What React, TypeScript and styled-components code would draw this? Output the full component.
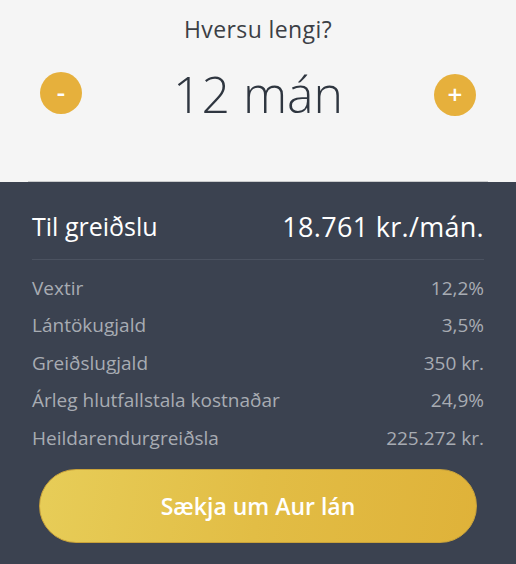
import React from 'react';
import styled, { createGlobalStyle } from 'styled-components';

const GlobalStyle = createGlobalStyle`
  html, body {
    margin: 0;
    padding: 0;
    background: #3b4250;
  }
  body {
    font-family: "Open Sans", Lato, sans-serif;
  }
`;

const Page = styled.div`
  width: 516px;
  height: 564px;
  display: flex;
  flex-direction: column;
  overflow: hidden;
`;

const Top = styled.section`
  background-color: #f5f5f5;
  height: 182px;
  display: flex;
  justify-content: center;
`;

const TopInner = styled.div`
  width: 460px;
  border-bottom: 1px solid #c9cacc;
  display: flex;
  flex-direction: column;
  align-items: center;
  box-sizing: border-box;
`;

const Question = styled.h2`
  margin: 14px 0 0;
  font-size: 23px;
  line-height: 30px;
  font-weight: 400;
  letter-spacing: 0.4px;
  color: #3c3f45;
`;

const Stepper = styled.div`
  width: 436px;
  margin-top: 20px;
  display: flex;
  align-items: center;
  justify-content: space-between;
`;

const StepButton = styled.button<{ $offset?: number }>`
  width: 42px;
  height: 42px;
  border-radius: 50%;
  border: none;
  background-color: #e6b03c;
  color: white;
  font-family: "Open Sans", sans-serif;
  font-size: 26px;
  font-weight: 600;
  line-height: 1;
  padding: 0 0 3px;
  margin-top: ${(p) => p.$offset || 0}px;
  display: flex;
  align-items: center;
  justify-content: center;
  cursor: pointer;
`;

const Months = styled.div`
  font-size: 50px;
  font-weight: 300;
  color: #2f3640;
  line-height: 60px;
`;

const Bottom = styled.section`
  flex: 1;
  background-color: #3b4250;
  padding: 0 32px;
  display: flex;
  flex-direction: column;
`;

const Total = styled.div`
  display: flex;
  justify-content: space-between;
  align-items: center;
  height: 40px;
  margin-top: 24px;
  color: #ffffff;
`;

const TotalLabel = styled.span`
  font-size: 25px;
`;

const TotalValue = styled.span`
  font-size: 27px;
  letter-spacing: 0.3px;
`;

const Divider = styled.hr`
  border: none;
  border-top: 1px solid #4b5260;
  margin: 13px 0 9px;
  width: 100%;
`;

const Row = styled.div`
  height: 37.5px;
  display: flex;
  align-items: center;
  justify-content: space-between;
  font-size: 19px;
  color: #a8acb3;
`;

const Apply = styled.button`
  margin: 12px 7px 0 7px;
  height: 74px;
  border-radius: 37px;
  border: 1px solid #c9a23a;
  background: linear-gradient(100deg, #e7cd58 0%, #e2bd45 50%, #dfb239 100%);
  color: #ffffff;
  font-family: "Open Sans", Lato, sans-serif;
  font-size: 23px;
  font-weight: 600;
  cursor: pointer;
`;

const rows = [
  ['Vextir', '12,2%'],
  ['Lántökugjald', '3,5%'],
  ['Greiðslugjald', '350 kr.'],
  ['Árleg hlutfallstala kostnaðar', '24,9%'],
  ['Heildarendurgreiðsla', '225.272 kr.'],
];

export default function App() {
  return (
    <Page>
      <GlobalStyle />
      <Top>
        <TopInner>
          <Question>Hversu lengi?</Question>
          <Stepper>
            <StepButton $offset={-2}>-</StepButton>
            <Months>12 mán</Months>
            <StepButton $offset={2}>+</StepButton>
          </Stepper>
        </TopInner>
      </Top>
      <Bottom>
        <Total>
          <TotalLabel>Til greiðslu</TotalLabel>
          <TotalValue>18.761 kr./mán.</TotalValue>
        </Total>
        <Divider />
        {rows.map(([label, value]) => (
          <Row key={label}>
            <span>{label}</span>
            <span>{value}</span>
          </Row>
        ))}
        <Apply>Sækja um Aur lán</Apply>
      </Bottom>
    </Page>
  );
}
